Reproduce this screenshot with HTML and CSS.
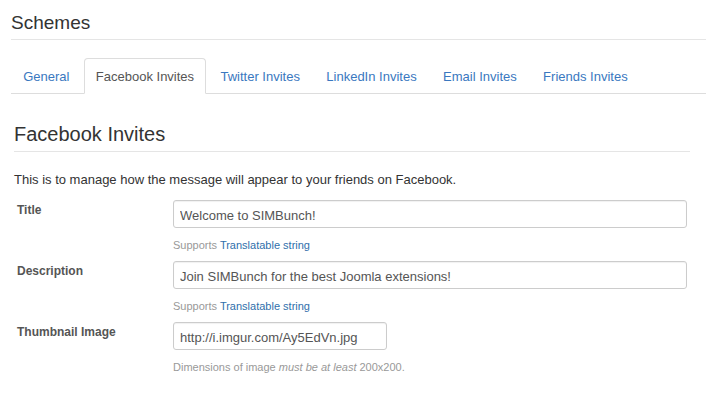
FILE: index.html
```html
<!DOCTYPE html>
<html lang="en">
<head>
    <meta charset="UTF-8">
    <meta name="viewport" content="width=device-width, initial-scale=1.0">
    <title>Schemes</title>
    <link rel="stylesheet" href="styles.css">
</head>
<body>
    <div class="page">
        <div class="page-header">
            <h1>Schemes</h1>
        </div>
        <ul class="nav-tabs">
            <li><a href="#">General</a></li>
            <li class="active"><a href="#">Facebook Invites</a></li>
            <li><a href="#">Twitter Invites</a></li>
            <li><a href="#">LinkedIn Invites</a></li>
            <li><a href="#">Email Invites</a></li>
            <li><a href="#">Friends Invites</a></li>
        </ul>
        <div class="tab-content">
            <h2>Facebook Invites</h2>
            <p class="intro">This is to manage how the message will appear to your friends on Facebook.</p>
            <form class="form-horizontal">
                <div class="control-group">
                    <label for="title">Title</label>
                    <div class="controls">
                        <input type="text" id="title" value="Welcome to SIMBunch!">
                        <div class="help-block">Supports <a href="#">Translatable string</a></div>
                    </div>
                </div>
                <div class="control-group">
                    <label for="description">Description</label>
                    <div class="controls">
                        <input type="text" id="description" value="Join SIMBunch for the best Joomla extensions!">
                        <div class="help-block">Supports <a href="#">Translatable string</a></div>
                    </div>
                </div>
                <div class="control-group">
                    <label for="thumb">Thumbnail Image</label>
                    <div class="controls">
                        <input type="text" id="thumb" class="input-short" value="http://i.imgur.com/Ay5EdVn.jpg">
                        <div class="help-block">Dimensions of image <em>must be at least</em> 200x200.</div>
                    </div>
                </div>
            </form>
        </div>
    </div>
</body>
</html>
```

FILE: styles.css
```css
body {
    font-family: "Liberation Sans", Arial, sans-serif;
    font-size: 13px;
    color: #333;
    background-color: #fff;
    margin: 0;
}
.page {
    padding-left: 11px;
}
.page-header {
    padding: 12px 0 5px 0;
    border-bottom: 1px solid #e5e5e5;
}
.page-header h1 {
    margin: 0;
    font-size: 19px;
    line-height: 22px;
    font-weight: normal;
    color: #333;
}
.nav-tabs {
    list-style: none;
    margin: 18px 0 0 0;
    padding: 0;
    display: flex;
    border-bottom: 1px solid #ddd;
}
.nav-tabs li {
    margin-right: 2px;
    margin-bottom: -1px;
}
.nav-tabs a {
    display: block;
    padding: 8px 11.2px 6px 11.2px;
    line-height: 20px;
    border: 1px solid transparent;
    border-radius: 4px 4px 0 0;
    color: #3a78c0;
    text-decoration: none;
}
.nav-tabs .active a {
    color: #555;
    background-color: #fff;
    border-color: #ddd #ddd transparent #ddd;
}
.tab-content {
    padding: 28px 16px 0 3px;
}
.tab-content h2 {
    margin: 0;
    font-size: 20px;
    line-height: 24px;
    font-weight: normal;
    color: #333;
    padding-bottom: 5px;
    border-bottom: 1px solid #e5e5e5;
}
.intro {
    margin: 19px 0 11px 0;
    line-height: 18px;
}
.control-group {
    display: flex;
    margin-bottom: 8px;
}
.control-group label {
    width: 156px;
    padding: 2px 0 0 3px;
    line-height: 16px;
    font-size: 12px;
    font-weight: bold;
    color: #555;
}
.controls {
    flex: 1;
    padding-right: 3px;
}
.controls input {
    display: block;
    box-sizing: border-box;
    width: 100%;
    height: 28px;
    padding: 4px 6px 2px 6px;
    line-height: 20px;
    font-family: inherit;
    font-size: 13px;
    color: #555;
    border: 1px solid #ccc;
    border-radius: 3px;
    box-shadow: inset 0 1px 1px rgba(0, 0, 0, 0.06);
}
.controls .input-short {
    width: 214px;
}
.help-block {
    margin-top: 10px;
    font-size: 11px;
    line-height: 15px;
    color: #999;
}
.help-block a {
    color: #2f6fab;
    text-decoration: none;
}
```
